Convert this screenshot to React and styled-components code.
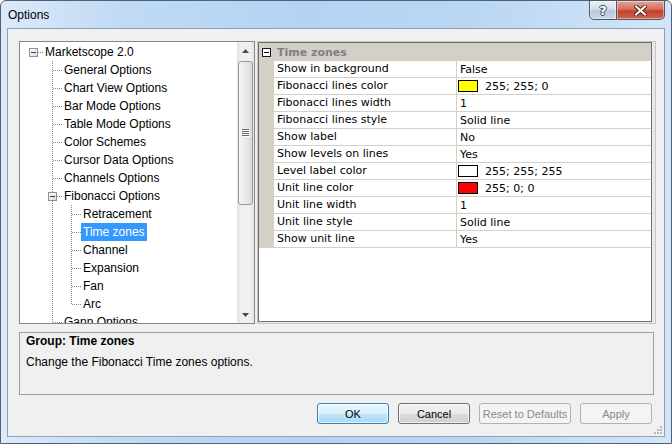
import React from "react";
import styled, { createGlobalStyle } from "styled-components";

const GlobalStyle = createGlobalStyle`
  *, *::before, *::after { box-sizing: border-box; }
  html, body { margin: 0; padding: 0; background: #ffffff; }
  body { width: 672px; height: 444px; overflow: hidden; font-family: "Liberation Sans", Arial, sans-serif; }
`;

const treeRows = [
  { label: "Marketscope 2.0", cells: ["rootBox"] },
  { label: "General Options", cells: ["blank", "tee"] },
  { label: "Chart View Options", cells: ["blank", "tee"] },
  { label: "Bar Mode Options", cells: ["blank", "tee"] },
  { label: "Table Mode Options", cells: ["blank", "tee"] },
  { label: "Color Schemes", cells: ["blank", "tee"] },
  { label: "Cursor Data Options", cells: ["blank", "tee"] },
  { label: "Channels Options", cells: ["blank", "tee"] },
  { label: "Fibonacci Options", cells: ["blank", "teeBox"] },
  { label: "Retracement", cells: ["blank", "pipe", "tee"] },
  { label: "Time zones", cells: ["blank", "pipe", "tee"], selected: true },
  { label: "Channel", cells: ["blank", "pipe", "tee"] },
  { label: "Expansion", cells: ["blank", "pipe", "tee"] },
  { label: "Fan", cells: ["blank", "pipe", "tee"] },
  { label: "Arc", cells: ["blank", "pipe", "ell"] },
  { label: "Gann Options", cells: ["blank", "tee"] },
];

const props = [
  { name: "Show in background", value: "False" },
  { name: "Fibonacci lines color", value: "255; 255; 0", color: "#ffff00" },
  { name: "Fibonacci lines width", value: "1" },
  { name: "Fibonacci lines style", value: "Solid line" },
  { name: "Show label", value: "No" },
  { name: "Show levels on lines", value: "Yes" },
  { name: "Level label color", value: "255; 255; 255", color: "#ffffff" },
  { name: "Unit line color", value: "255; 0; 0", color: "#ff0000" },
  { name: "Unit line width", value: "1" },
  { name: "Unit line style", value: "Solid line" },
  { name: "Show unit line", value: "Yes" },
];

const Window = styled.div`
  width: 672px;
  height: 444px;
  border: 1px solid #52606f;
  border-radius: 6px 6px 0 0;
  padding: 0 6px 6px;
  display: flex;
  flex-direction: column;
  background: linear-gradient(90deg, #dce9f8 0%, #c0daf5 18%, #b4d3f3 45%, #bad6f3 70%, #d3e5f8 100%);
`;

const TitleBar = styled.div`
  height: 27px;
  display: flex;
  align-items: flex-start;
  justify-content: space-between;
`;

const Title = styled.div`
  margin: 7px 0 0 1px;
  font-size: 12px;
  line-height: 15px;
  color: #000;
`;

const CaptionButtons = styled.div`
  display: flex;
  height: 20px;
  margin-top: -1px;
`;

const CaptionButton = styled.div`
  width: ${(p) => (p.close ? "48px" : "28px")};
  height: 20px;
  display: flex;
  align-items: center;
  justify-content: center;
  border: 1px solid #4a5868;
  border-left-width: ${(p) => (p.close ? "0" : "1px")};
  border-radius: ${(p) => (p.close ? "0 0 5px 0" : "0 0 0 5px")};
  background: ${(p) =>
    p.close
      ? "linear-gradient(180deg, #e8a394 0%, #d6705c 45%, #c4412b 55%, #d2614b 100%)"
      : "linear-gradient(180deg, #e9f0f7 0%, #d3deea 45%, #b9c9da 55%, #c9d7e6 100%)"};
  box-shadow: inset 0 0 0 1px rgba(255, 255, 255, 0.45);
`;

const HelpGlyph = styled.span`
  font-family: "DejaVu Sans", sans-serif;
  font-weight: bold;
  font-size: 13px;
  line-height: 13px;
  color: #fff;
  text-shadow: 1px 0 0 #3d4b5c, -1px 0 0 #3d4b5c, 0 1px 0 #3d4b5c, 0 -1px 0 #3d4b5c;
`;

const Client = styled.div`
  flex: 1;
  border: 1px solid #8ea3b8;
  background: #f0f0f0;
  display: flex;
  flex-direction: column;
  padding: 12px 8px 12px 11px;
  position: relative;
`;

const TopRow = styled.div`
  height: 283px;
  display: flex;
  gap: 2px;
`;

const Tree = styled.div`
  width: 236px;
  border: 1px solid #828790;
  background: #fff;
  display: flex;
  overflow: hidden;
`;

const TreeList = styled.div`
  flex: 1;
  padding-top: 1px;
  overflow: hidden;
  font-size: 12px;
  color: #000;
`;

const TreeRow = styled.div`
  height: 18px;
  display: flex;
  align-items: center;
  padding-left: 4px;
  white-space: nowrap;
`;

const TreeLabel = styled.span`
  height: 18px;
  line-height: 18px;
  padding: 0 2px;
  background: ${(p) => (p.selected ? "#3399ff" : "transparent")};
  color: ${(p) => (p.selected ? "#fff" : "#000")};
`;

const ScrollBar = styled.div`
  width: 17px;
  display: flex;
  flex-direction: column;
  background: linear-gradient(90deg, #e2e2e2 0%, #f0f0f0 25%, #f0f0f0 75%, #e6e6e6 100%);
`;

const ScrollArrow = styled.div`
  height: 17px;
  display: flex;
  align-items: center;
  justify-content: center;
`;

const Thumb = styled.div`
  height: 144px;
  margin: 2px 1px 0;
  border: 1px solid #989898;
  border-radius: 3px;
  background: linear-gradient(90deg, #f4f4f4 0%, #e9e9e9 50%, #dadada 100%);
  display: flex;
  align-items: center;
  justify-content: center;
`;

const Track = styled.div`
  flex: 1;
`;

const GridWrap = styled.div`
  flex: 1;
  border: 1px solid #c6c6c6;
  background: #e9e9e9;
  padding: 0 3px 1px 0;
  display: flex;
`;

const Grid = styled.div`
  flex: 1;
  border: 1px solid #6e6e6e;
  background: #fff;
  display: flex;
  flex-direction: column;
  overflow: hidden;
  font-family: "DejaVu Sans", Tahoma, sans-serif;
  font-size: 11px;
  color: #000;
`;

const GridHeader = styled.div`
  height: 18px;
  flex: none;
  display: flex;
  align-items: center;
  background: #d4d0c8;
  font-weight: bold;
  color: #808080;
`;

const HeaderToggle = styled.div`
  width: 15px;
  display: flex;
  align-items: center;
  justify-content: flex-start;
  padding-left: 3px;
`;

const HeaderLabel = styled.span`
  padding-left: 3px;
`;

const GridRow = styled.div`
  height: 17px;
  flex: none;
  display: flex;
`;

const Margin = styled.div`
  width: 15px;
  background: #d4d0c8;
`;

const NameCell = styled.div`
  width: 183px;
  border-right: 1px solid #d4d0c8;
  border-bottom: 1px solid #d4d0c8;
  padding-left: 3px;
  line-height: 16px;
  white-space: nowrap;
`;

const ValueCell = styled.div`
  flex: 1;
  border-bottom: 1px solid #d4d0c8;
  padding-left: ${(p) => (p.swatch ? "1px" : "3px")};
  display: flex;
  align-items: center;
  gap: 7px;
  white-space: nowrap;
`;

const Swatch = styled.span`
  width: 20px;
  height: 12px;
  border: 1px solid #000;
  background: ${(p) => p.color};
`;

const Description = styled.div`
  height: 63px;
  margin: 8px 2px 0 0;
  border: 1px solid #a0a0a0;
  padding: 0 6px;
  flex: none;
`;

const DescTitle = styled.div`
  font-weight: bold;
  font-size: 12px;
  line-height: 16px;
  color: #000;
`;

const DescText = styled.div`
  margin-top: 6px;
  font-size: 12px;
  line-height: 15px;
  color: #000;
`;

const ButtonRow = styled.div`
  height: 21px;
  margin-top: 8px;
  padding-right: 4px;
  display: flex;
  justify-content: flex-end;
  gap: 9px;
  flex: none;
`;

const Button = styled.div`
  width: ${(p) => p.width || 72}px;
  height: 21px;
  display: flex;
  align-items: center;
  justify-content: center;
  font-size: 11px;
  border-radius: 3px;
  border: 1px solid ${(p) => (p.primary ? "#3c7fb1" : p.disabled ? "#adb2b5" : "#707070")};
  color: ${(p) => (p.disabled ? "#8a8a8a" : "#000")};
  background: ${(p) =>
    p.primary
      ? "linear-gradient(180deg, #eaf6fd 0%, #d9f0fc 50%, #bee6fd 51%, #a7d9f5 100%)"
      : p.disabled
      ? "#f4f4f4"
      : "linear-gradient(180deg, #f2f2f2 0%, #ebebeb 50%, #dddddd 51%, #cfcfcf 100%)"};
  box-shadow: inset 0 0 0 1px ${(p) => (p.disabled ? "#f4f4f4" : "rgba(255,255,255,0.7)")};
`;

const Grip = styled.div`
  position: absolute;
  right: 1px;
  bottom: 1px;
  width: 10px;
  height: 10px;
  display: flex;
`;

const TreeGlyph = ({ kind }) => {
  const dot = { stroke: "#8a8a8a", strokeWidth: 1, strokeDasharray: "1 1" };
  const vertical = kind === "pipe" || kind === "tee" || kind === "teeBox";
  const half = kind === "ell";
  const horiz = kind !== "blank" && kind !== "pipe";
  const box = kind === "rootBox" || kind === "teeBox";
  return (
    <svg width="19" height="18" viewBox="0 0 19 18" style={{ flex: "none" }}>
      <defs>
        <linearGradient id="tb" x1="0" y1="0" x2="1" y2="1">
          <stop offset="0" stopColor="#ffffff" />
          <stop offset="1" stopColor="#d8d8d8" />
        </linearGradient>
      </defs>
      {vertical && <line x1="9.5" y1="0" x2="9.5" y2="18" {...dot} />}
      {half && <line x1="9.5" y1="0" x2="9.5" y2="10" {...dot} />}
      {horiz && <line x1="10" y1="9.5" x2="19" y2="9.5" {...dot} />}
      {box && (
        <g>
          <rect x="5.5" y="5.5" width="8" height="8" fill="url(#tb)" stroke="#919191" />
          <line x1="7" y1="9.5" x2="12" y2="9.5" stroke="#1f3a87" />
        </g>
      )}
    </svg>
  );
};

const Arrow = ({ down }) => (
  <svg width="7" height="4" viewBox="0 0 7 4">
    <path d={down ? "M0 0H7L3.5 4Z" : "M0 4H7L3.5 0Z"} fill="#4a4a4a" />
  </svg>
);

const App = () => {
  return (
    <>
      <GlobalStyle />
      <Window>
        <TitleBar>
          <Title>Options</Title>
          <CaptionButtons>
            <CaptionButton>
              <HelpGlyph>?</HelpGlyph>
            </CaptionButton>
            <CaptionButton close>
              <svg width="13" height="11" viewBox="0 0 13 11">
                <path d="M2 1.5L11 9.5M11 1.5L2 9.5" stroke="#4b2a25" strokeWidth="4" strokeLinecap="square" />
                <path d="M2 1.5L11 9.5M11 1.5L2 9.5" stroke="#ffffff" strokeWidth="2" strokeLinecap="square" />
              </svg>
            </CaptionButton>
          </CaptionButtons>
        </TitleBar>
        <Client>
          <TopRow>
            <Tree>
              <TreeList>
                {treeRows.map((row) => (
                  <TreeRow key={row.label}>
                    {row.cells.map((c, i) => (
                      <TreeGlyph key={i} kind={c} />
                    ))}
                    <TreeLabel selected={row.selected}>{row.label}</TreeLabel>
                  </TreeRow>
                ))}
              </TreeList>
              <ScrollBar>
                <ScrollArrow>
                  <Arrow />
                </ScrollArrow>
                <Thumb>
                  <svg width="8" height="8" viewBox="0 0 8 8">
                    {[0, 2, 4, 6].map((y) => (
                      <g key={y}>
                        <line x1="0" y1={y + 0.5} x2="7" y2={y + 0.5} stroke="#6a6a6a" />
                        <line x1="1" y1={y + 1.5} x2="8" y2={y + 1.5} stroke="#ffffff" />
                      </g>
                    ))}
                  </svg>
                </Thumb>
                <Track />
                <ScrollArrow>
                  <Arrow down />
                </ScrollArrow>
              </ScrollBar>
            </Tree>
            <GridWrap>
              <Grid>
                <GridHeader>
                  <HeaderToggle>
                    <svg width="9" height="9" viewBox="0 0 9 9">
                      <rect x="0.5" y="0.5" width="8" height="8" fill="#ffffff" stroke="#1a1a1a" />
                      <line x1="2" y1="4.5" x2="7" y2="4.5" stroke="#000" />
                    </svg>
                  </HeaderToggle>
                  <HeaderLabel>Time zones</HeaderLabel>
                </GridHeader>
                {props.map((p) => (
                  <GridRow key={p.name}>
                    <Margin />
                    <NameCell>{p.name}</NameCell>
                    <ValueCell swatch={!!p.color}>
                      {p.color && <Swatch color={p.color} />}
                      <span>{p.value}</span>
                    </ValueCell>
                  </GridRow>
                ))}
              </Grid>
            </GridWrap>
          </TopRow>
          <Description>
            <DescTitle>Group: Time zones</DescTitle>
            <DescText>Change the Fibonacci Time zones options.</DescText>
          </Description>
          <ButtonRow>
            <Button primary>OK</Button>
            <Button>Cancel</Button>
            <Button width={92} disabled>
              Reset to Defaults
            </Button>
            <Button disabled>Apply</Button>
          </ButtonRow>
          <Grip>
            <svg width="10" height="10" viewBox="0 0 10 10">
              {[
                [7, 1],
                [4, 4],
                [7, 4],
                [1, 7],
                [4, 7],
                [7, 7],
              ].map(([x, y]) => (
                <rect key={`${x}-${y}`} x={x} y={y} width="2" height="2" fill="#b9b9b9" />
              ))}
            </svg>
          </Grip>
        </Client>
      </Window>
    </>
  );
};

export default App;
